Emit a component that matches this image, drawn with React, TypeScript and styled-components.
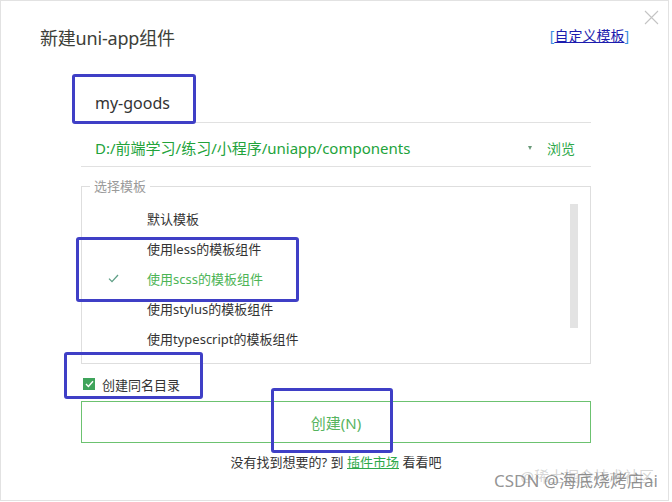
import React from "react";
import styled, { createGlobalStyle } from "styled-components";

const GlobalStyle = createGlobalStyle`
  html, body {
    margin: 0;
    padding: 0;
    background: #ffffff;
  }
  body {
    font-family: "Noto Sans", "Noto Sans CJK SC", sans-serif;
  }
  * {
    box-sizing: border-box;
  }
`;

const templates = [
  { name: "默认模板", checked: false },
  { name: "使用less的模板组件", checked: false },
  { name: "使用scss的模板组件", checked: true },
  { name: "使用stylus的模板组件", checked: false },
  { name: "使用typescript的模板组件", checked: false },
];

type Mark = { left: number; top: number; width: number; height: number };

const marks: Mark[] = [
  { left: 71, top: 73, width: 124, height: 50 },
  { left: 75, top: 236, width: 223, height: 65 },
  { left: 63, top: 351, width: 139, height: 47 },
  { left: 270, top: 387, width: 122, height: 65 },
];

const App = () => {
  return (
    <>
      <GlobalStyle />
      <Window>
        <CloseButton aria-label="close">
          <svg width="15" height="15" viewBox="0 0 15 15">
            <path d="M1 1 L14 14 M14 1 L1 14" stroke="#c4c4c4" strokeWidth="1.1" fill="none" />
          </svg>
        </CloseButton>

        <Header>
          <Title>新建uni-app组件</Title>
          <CustomLink>
            <Bracket>[</Bracket>
            <LinkText>自定义模板</LinkText>
            <Bracket>]</Bracket>
          </CustomLink>
        </Header>

        <Body>
          <NameRow>my-goods</NameRow>

          <PathRow>
            <PathText>D:/前端学习/练习/小程序/uniapp/components</PathText>
            <Caret />
            <Browse>浏览</Browse>
          </PathRow>

          <TemplateBox>
            <Legend>选择模板</Legend>
            <TemplateInner>
              <TemplateList>
                {templates.map((t) => (
                  <TemplateItem key={t.name} $active={t.checked}>
                    <CheckCell>
                      {t.checked && (
                        <svg width="11" height="9" viewBox="0 0 11 9">
                          <path d="M1 4.6 L4 7.6 L10 1" stroke="#5f9f86" strokeWidth="1.3" fill="none" />
                        </svg>
                      )}
                    </CheckCell>
                    <span>{t.name}</span>
                  </TemplateItem>
                ))}
              </TemplateList>
              <ScrollThumb />
            </TemplateInner>
          </TemplateBox>

          <CheckRow>
            <CheckBox>
              <svg width="9" height="8" viewBox="0 0 9 8">
                <path d="M1 4 L3.4 6.4 L8 1.2" stroke="#ffffff" strokeWidth="1.4" fill="none" />
              </svg>
            </CheckBox>
            <span>创建同名目录</span>
          </CheckRow>

          <CreateButton>创建(N)</CreateButton>

          <Footer>
            没有找到想要的? 到 <MarketLink>插件市场</MarketLink> 看看吧
          </Footer>
        </Body>

        <Watermark>
          <WatermarkBack>@稀土掘金技术社区</WatermarkBack>
          <WatermarkFront>CSDN @海底烧烤店ai</WatermarkFront>
        </Watermark>

        {marks.map((m, i) => (
          <Highlight
            key={i}
            style={{ left: m.left, top: m.top, width: m.width, height: m.height }}
          />
        ))}
      </Window>
    </>
  );
};

export default App;

const Window = styled.div`
  position: relative;
  width: 669px;
  height: 501px;
  border: 1px solid #e2e2e2;
  background: #ffffff;
  overflow: hidden;
`;

const CloseButton = styled.div`
  position: absolute;
  top: 9px;
  right: 9px;
  width: 15px;
  height: 15px;
  display: flex;
`;

const Header = styled.div`
  height: 30px;
  margin-top: 21px;
  padding: 0 39px 0 39px;
  display: flex;
  align-items: center;
  justify-content: space-between;
`;

const Title = styled.div`
  font-size: 18px;
  color: #3d4038;
  letter-spacing: -0.2px;
`;

const CustomLink = styled.a`
  font-size: 14px;
  display: flex;
  align-items: center;
  margin-top: -4px;
`;

const Bracket = styled.span`
  color: #3a8ee0;
`;

const LinkText = styled.span`
  color: #1c1cae;
  text-decoration: underline;
`;

const Body = styled.div`
  padding: 0 77px 0 80px;
  display: flex;
  flex-direction: column;
`;

const NameRow = styled.div`
  margin-top: 32px;
  height: 39px;
  padding-left: 14px;
  display: flex;
  align-items: center;
  font-size: 16px;
  color: #333333;
  border-bottom: 1px solid #e1e1e1;
`;

const PathRow = styled.div`
  height: 44px;
  padding: 6px 16px 0 14px;
  display: flex;
  align-items: center;
  border-bottom: 1px solid #e1e1e1;
`;

const PathText = styled.div`
  flex: 1;
  font-size: 15px;
  color: #22a33b;
`;

const Caret = styled.div`
  width: 0;
  height: 0;
  border-left: 2.5px solid transparent;
  border-right: 2.5px solid transparent;
  border-top: 4px solid #6a9a7a;
  margin-right: 15px;
`;

const Browse = styled.div`
  font-size: 14px;
  color: #2ea84a;
`;

const TemplateBox = styled.fieldset`
  margin: 12px 0 0 0;
  padding: 0;
  border: 1px solid #dedede;
`;

const Legend = styled.legend`
  margin-left: 8px;
  padding: 0 4px;
  font-size: 13px;
  line-height: 14px;
  color: #9a9a9a;
`;

const TemplateInner = styled.div`
  display: flex;
  padding: 10px 0 10px 0;
`;

const TemplateList = styled.div`
  flex: 1;
  display: flex;
  flex-direction: column;
`;

const TemplateItem = styled.div<{ $active: boolean }>`
  height: 30px;
  display: flex;
  align-items: center;
  font-size: 13px;
  color: ${(p) => (p.$active ? "#4cb455" : "#333333")};
`;

const CheckCell = styled.div`
  width: 65px;
  padding-left: 26px;
  display: flex;
  align-items: center;
`;

const ScrollThumb = styled.div`
  width: 8px;
  height: 124px;
  margin: 1px 12px 0 0;
  background: #e3e3e3;
`;

const CheckRow = styled.div`
  margin-top: 10px;
  height: 20px;
  padding-left: 2px;
  display: flex;
  align-items: center;
  gap: 7px;
  font-size: 13px;
  color: #333333;
`;

const CheckBox = styled.div`
  width: 12px;
  height: 12px;
  background: #3fa45b;
  display: flex;
  align-items: center;
  justify-content: center;
`;

const CreateButton = styled.div`
  margin-top: 7px;
  height: 42px;
  border: 1px solid #6cc270;
  display: flex;
  align-items: center;
  justify-content: center;
  font-size: 15px;
  color: #56b45e;
`;

const Footer = styled.div`
  margin-top: 10px;
  text-align: center;
  font-size: 13px;
  line-height: 18px;
  color: #333333;
`;

const MarketLink = styled.span`
  color: #2ea84a;
  text-decoration: underline;
`;

const Watermark = styled.div`
  position: absolute;
  right: 10px;
  bottom: 8px;
  display: grid;
  justify-items: end;
`;

const WatermarkBack = styled.span`
  grid-area: 1 / 1;
  font-size: 15px;
  color: rgba(150, 150, 150, 0.4);
  margin: -2px 4px 0 0;
`;

const WatermarkFront = styled.span`
  grid-area: 1 / 1;
  font-size: 17px;
  color: rgba(120, 120, 120, 0.8);
`;

const Highlight = styled.div`
  position: absolute;
  border: 3px solid #3f3fc6;
  border-radius: 3px;
  pointer-events: none;
`;
